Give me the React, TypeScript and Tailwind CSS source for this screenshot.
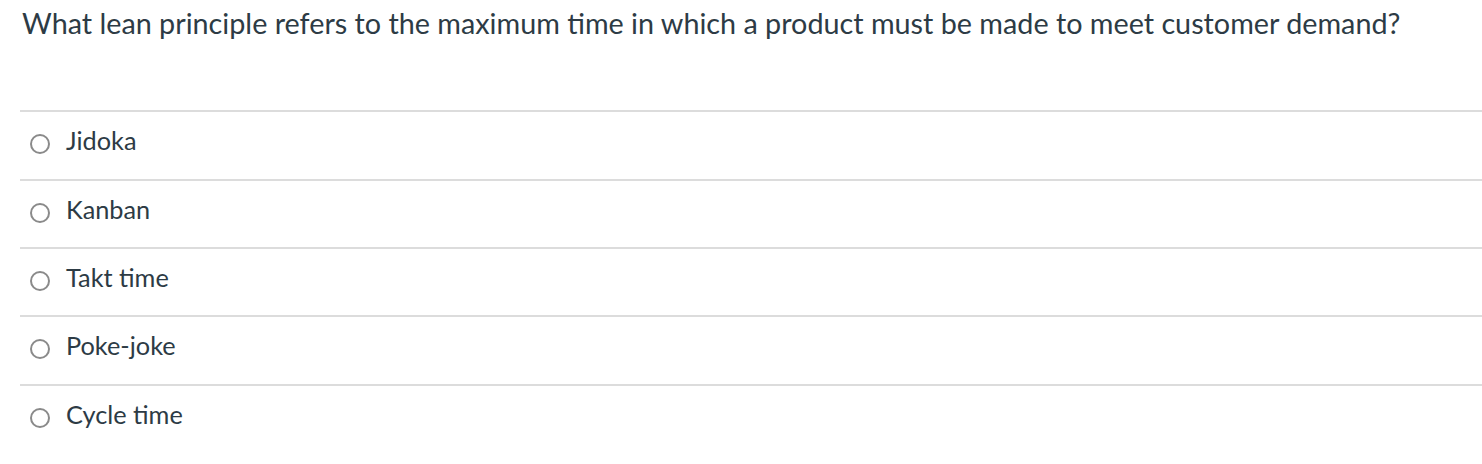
import React from "react";

const options = [
  { t: "Jidoka", h: "h-[69px]" },
  { t: "Kanban", h: "h-[68px]" },
  { t: "Takt time", h: "h-[68px]" },
  { t: "Poke-joke", h: "h-[69px]" },
  { t: "Cycle time", h: "h-[69px]" },
];

export default function App() {
  return (
    <div className="w-[1482px] h-[464px] bg-white text-[#2d3b45] font-['Lato',sans-serif] overflow-hidden">
      <div className="pl-[22px] pt-[2px] text-[28.75px] leading-[42px]">
        What lean principle refers to the maximum time in which a product must be made to meet customer demand?
      </div>
      <div className="ml-[20px] mt-[66px]">
        {options.map((o) => (
          <div
            key={o.t}
            className={`flex items-start border-t-2 border-[#dcdcdc] ${o.h}`}
          >
            <span className="mt-[22px] ml-[9.5px] w-[20px] h-[20px] shrink-0 rounded-full border-2 border-[#8a8a8a] box-border" />
            <span className="mt-[12px] ml-[16.5px] text-[25.3px] leading-[32px]">{o.t}</span>
          </div>
        ))}
      </div>
    </div>
  );
}
